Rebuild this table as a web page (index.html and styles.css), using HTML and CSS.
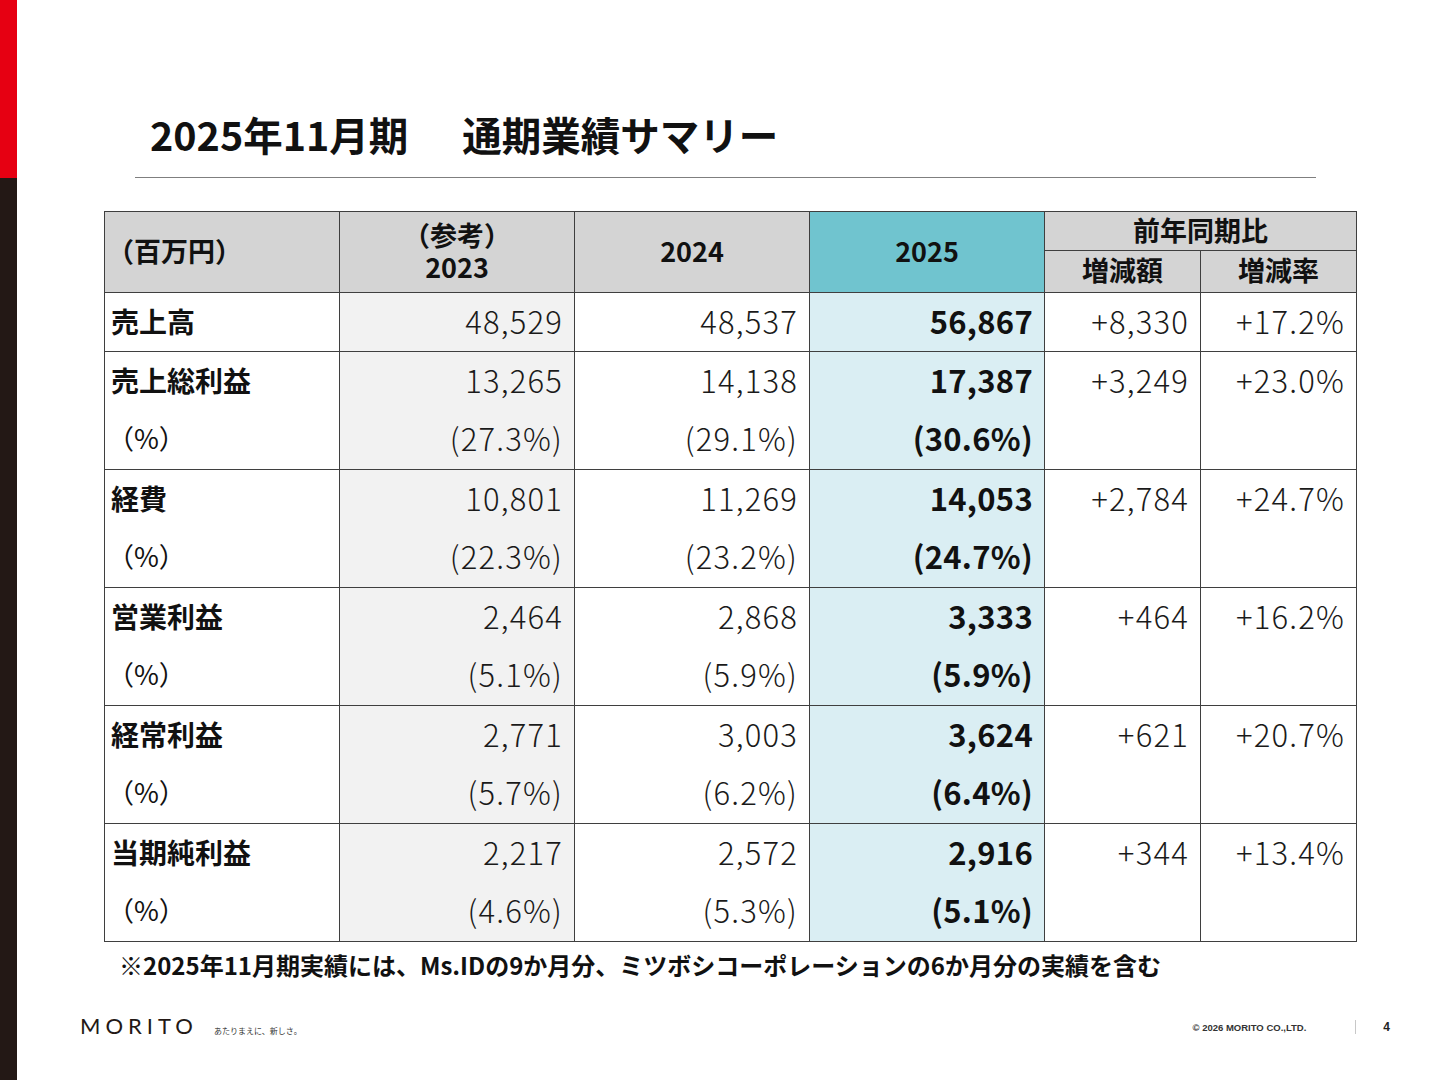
FILE: index.html
```html
<!DOCTYPE html>
<html lang="ja">
<head>
<meta charset="utf-8">
<title>2025年11月期 通期業績サマリー</title>
<link rel="stylesheet" href="styles.css">
</head>
<body>
<div class="slide">
  <div class="sidebar">
    <div class="sidebar-red"></div>
    <div class="sidebar-dark"></div>
  </div>
  <div class="content">
    <h1 class="title"><span>2025年11月期</span><span class="title-gap"></span><span>通期業績サマリー</span></h1>
    <div class="rule"></div>
    <table class="summary">
      <colgroup>
        <col class="c-label"><col class="c-num"><col class="c-num"><col class="c-num"><col class="c-diff"><col class="c-diff">
      </colgroup>
      <thead>
        <tr class="h1">
          <th rowspan="2" class="th-label">（百万円）</th>
          <th rowspan="2" class="th-ref">（参考）<br>2023</th>
          <th rowspan="2">2024</th>
          <th rowspan="2" class="th-cur">2025</th>
          <th colspan="2">前年同期比</th>
        </tr>
        <tr class="h2">
          <th>増減額</th>
          <th>増減率</th>
        </tr>
      </thead>
      <tbody>
        <tr class="grp">
          <td class="lbl">売上高</td><td class="ref">48,529</td><td>48,537</td><td class="cur">56,867</td><td>+8,330</td><td>+17.2%</td>
        </tr>
        <tr class="grp">
          <td class="lbl">売上総利益</td><td class="ref">13,265</td><td>14,138</td><td class="cur">17,387</td><td>+3,249</td><td>+23.0%</td>
        </tr>
        <tr class="sub">
          <td class="pct">（%）</td><td class="ref">(27.3%)</td><td>(29.1%)</td><td class="cur">(30.6%)</td><td></td><td></td>
        </tr>
        <tr class="grp">
          <td class="lbl">経費</td><td class="ref">10,801</td><td>11,269</td><td class="cur">14,053</td><td>+2,784</td><td>+24.7%</td>
        </tr>
        <tr class="sub">
          <td class="pct">（%）</td><td class="ref">(22.3%)</td><td>(23.2%)</td><td class="cur">(24.7%)</td><td></td><td></td>
        </tr>
        <tr class="grp">
          <td class="lbl">営業利益</td><td class="ref">2,464</td><td>2,868</td><td class="cur">3,333</td><td>+464</td><td>+16.2%</td>
        </tr>
        <tr class="sub">
          <td class="pct">（%）</td><td class="ref">(5.1%)</td><td>(5.9%)</td><td class="cur">(5.9%)</td><td></td><td></td>
        </tr>
        <tr class="grp">
          <td class="lbl">経常利益</td><td class="ref">2,771</td><td>3,003</td><td class="cur">3,624</td><td>+621</td><td>+20.7%</td>
        </tr>
        <tr class="sub">
          <td class="pct">（%）</td><td class="ref">(5.7%)</td><td>(6.2%)</td><td class="cur">(6.4%)</td><td></td><td></td>
        </tr>
        <tr class="grp">
          <td class="lbl">当期純利益</td><td class="ref">2,217</td><td>2,572</td><td class="cur">2,916</td><td>+344</td><td>+13.4%</td>
        </tr>
        <tr class="sub">
          <td class="pct">（%）</td><td class="ref">(4.6%)</td><td>(5.3%)</td><td class="cur">(5.1%)</td><td></td><td></td>
        </tr>
      </tbody>
    </table>
    <p class="note">※2025年11月期実績には、Ms.IDの9か月分、ミツボシコーポレーションの6か月分の実績を含む</p>
    <footer class="footer">
      <div class="brand">
        <span class="logo">MORITO</span>
        <span class="tagline">あたりまえに、新しさ。</span>
      </div>
      <div class="meta">
        <span class="copy">© 2026 MORITO CO.,LTD.</span>
        <span class="divider"></span>
        <span class="page">4</span>
      </div>
    </footer>
  </div>
</div>
</body>
</html>
```

FILE: styles.css
```css
* { box-sizing: border-box; }
html, body { margin: 0; padding: 0; background: #fff; }
body {
  font-family: "Noto Sans CJK JP", "Noto Sans", sans-serif;
  color: #111;
}
.slide {
  width: 1440px;
  height: 1080px;
  display: flex;
  overflow: hidden;
  background: #fff;
}
.sidebar {
  width: 17px;
  display: flex;
  flex-direction: column;
  flex-shrink: 0;
}
.sidebar-red { height: 178px; background: #e60012; }
.sidebar-dark { flex: 1; background: #231815; }

.content {
  flex: 1;
  display: flex;
  flex-direction: column;
}
.title {
  margin: 106px 0 0 133px;
  font-size: 39.5px;
  line-height: 56px;
  font-weight: 700;
  letter-spacing: 0;
  color: #111;
  display: flex;
}
.title-gap { width: 54px; }
.rule {
  margin: 15px 0 0 118px;
  width: 1181px;
  height: 1px;
  background: #7f7f7f;
}
.summary {
  margin: 33px 0 0 87px;
  width: 1250px;
  border-collapse: collapse;
  table-layout: fixed;
}
.c-label { width: 235px; }
.c-num { width: 235px; }
.c-diff { width: 156px; }

.summary th, .summary td {
  border: 1px solid #3f3f3f;
  padding: 0 11px;
}
.summary th {
  background: #d4d4d4;
  font-size: 27px;
  font-weight: 700;
  text-align: center;
  line-height: 32px;
  padding-bottom: 3px;
  color: #111;
}
.summary th.th-label { text-align: left; padding-left: 2px; }
.summary th.th-cur { background: #70c4cf; }
.summary .h1 { height: 39px; }
.summary .h2 { height: 42px; }
.summary th.th-ref { line-height: 32px; padding-top: 0; padding-bottom: 2px; }

.summary td {
  height: 59px;
  font-size: 31px;
  font-weight: 300;
  letter-spacing: 1.2px;
  text-align: right;
  color: #1a1a1a;
  line-height: 36px;
  padding-bottom: 3px;
  background: #fff;
}
.summary td.lbl {
  text-align: left;
  font-size: 28px;
  font-weight: 700;
  letter-spacing: 0;
  padding-left: 6px;
  color: #111;
}
.summary td.pct {
  text-align: left;
  font-size: 27px;
  font-weight: 400;
  letter-spacing: 0;
  padding-left: 2px;
  color: #111;
}
.summary td.ref { background: #f2f2f2; }
.summary td.cur { background: #daeef3; font-weight: 700; letter-spacing: 0.3px; color: #111; }
.summary tr.grp td { border-bottom: none; }
.summary tr.sub td { border-top: none; }
.summary tbody tr:last-child td { border-bottom: 1px solid #3f3f3f; }
.summary tr.grp + tr.grp td { border-top: 1px solid #3f3f3f; }

.note {
  margin: 7px 0 0 102px;
  font-size: 24px;
  line-height: 32px;
  font-weight: 700;
  color: #111;
}
.footer {
  margin-top: auto;
  height: 72px;
  display: flex;
  justify-content: space-between;
  align-items: flex-start;
  padding: 4px 0 0 63px;
}
.brand { display: flex; align-items: baseline; gap: 16px; }
.logo {
  font-family: "Lato", "Liberation Sans", sans-serif;
  font-weight: 400;
  font-size: 22px;
  letter-spacing: 5px;
  color: #231815;
}
.tagline {
  font-size: 8px;
  color: #333;
}
.meta {
  display: flex;
  align-items: center;
  padding: 8px 50px 0 0;
}
.copy {
  font-family: "Liberation Sans", Arial, sans-serif;
  font-size: 9.5px;
  font-weight: 700;
  color: #333;
}
.divider {
  width: 1px;
  height: 14px;
  background: #c8c8c8;
  margin: 0 27px 0 49px;
}
.page {
  font-family: "Liberation Sans", Arial, sans-serif;
  font-size: 12px;
  font-weight: 700;
  color: #222;
}
```
